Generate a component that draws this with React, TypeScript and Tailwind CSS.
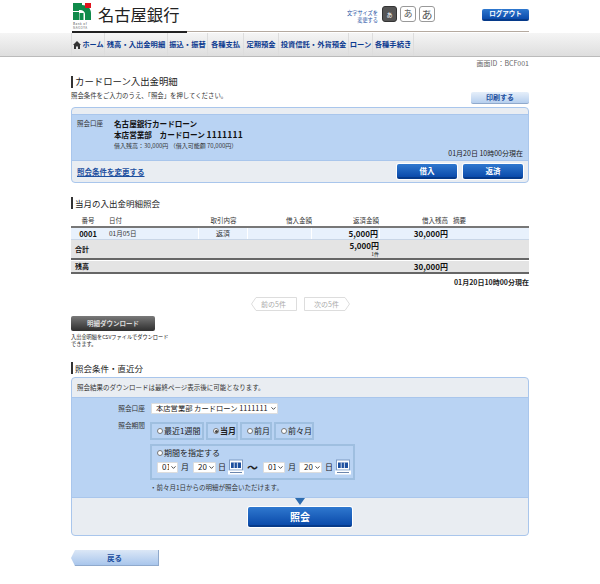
import React from "react";
import { ChevronDown } from "lucide-react";

const jp = "font-['Noto_Sans_CJK_JP','Liberation_Sans',sans-serif]";

const navItems = [
  { label: "残高・入出金明細", w: "w-[63px]" },
  { label: "振込・振替", w: "w-[40px]" },
  { label: "各種支払", w: "w-[36px]" },
  { label: "定期預金", w: "w-[35px]" },
  { label: "投資信託・外貨預金", w: "w-[70px]" },
  { label: "ローン", w: "w-[24px]" },
  { label: "各種手続き", w: "w-[41px]" },
];

const cols = "grid grid-cols-[34px_94px_49px_64px_68px_70px_79px]";

const Logo = () => (
  <svg width="20" height="27" viewBox="0 0 20 27">
    <path d="M1 1h9v2c5 0 9 3 9 8v7h-6v-6c0-2-2-4-5-4H7v1H1z" fill="#0f8a4a" />
    <path d="M1 10h6v8H1z" fill="#0f8a4a" />
    <path d="M7.5 11h4v7h-4z" fill="#0f8a4a" />
    <rect x="13" y="1" width="6" height="5" fill="#e0141e" />
    <text x="1" y="22.5" fontSize="3" letterSpacing="0.5" fill="#555">Bank of</text>
    <text x="1" y="26.5" fontSize="3" letterSpacing="0.5" fill="#555">NAGOYA</text>
  </svg>
);

const HomeIcon = () => (
  <svg width="8" height="8" viewBox="0 0 8 8" className="mr-[2px]">
    <path d="M4 0L8 4H7V8H5V5.5H3V8H1V4H0z" fill="#333" />
  </svg>
);

const Calendar = () => (
  <svg width="16" height="16" viewBox="0 0 16 16">
    <rect x="1.5" y="1" width="13" height="10" fill="#fff" stroke="#7f9cc4" />
    <rect x="3" y="3.5" width="10" height="5.5" fill="#1d4f9e" />
    <path d="M6.2 3.5v5.5M9.4 3.5v5.5" stroke="#fff" strokeWidth="0.8" />
    <rect x="0" y="11.5" width="16" height="4" fill="#fff" />
    <rect x="2" y="13" width="12" height="1" fill="#6b86ad" />
  </svg>
);

const SectionTitle = ({ children, size }: { children: React.ReactNode; size: string }) => (
  <div className="flex items-center h-[12px]">
    <div className="w-[2px] h-[12px] bg-[#333] mr-[2px]" />
    <span className={`${size} text-[#222] leading-none`}>{children}</span>
  </div>
);

const BlueButton = ({ label, w, h, size }: { label: string; w: string; h: string; size: string }) => (
  <div className={`${w} ${h} ${size} rounded-[2px] flex items-center justify-center text-white font-bold border-b-2 border-[#063a8a] bg-gradient-to-b from-[#2f78cf] to-[#0b4bab] shadow-[0_0_0_1px_#fff]`}>
    {label}
  </div>
);

const Choice = ({ label, w, checked }: { label: string; w: string; checked?: boolean }) => (
  <label className={`${w} h-[18px] border-2 border-[#9fbfe0] bg-[#b9d3f3] flex items-center pl-[5px] gap-[1px] text-[8px] text-[#222] ${checked ? "font-bold" : ""}`}>
    <span className="w-[6px] h-[6px] rounded-full border border-[#777] bg-white flex items-center justify-center">
      {checked && <span className="w-[3px] h-[3px] rounded-full bg-[#444]" />}
    </span>
    {label}
  </label>
);

const Dropdown = ({ value, w, size = "text-[8px]" }: { value: string; w: string; size?: string }) => (
  <div className={`${w} h-[11px] relative`}>
    <select
      defaultValue={value}
      className={`appearance-none w-full h-full bg-white ${size} leading-none rounded-[1px] border border-[#ddd] text-[#222] pl-[4px] pr-[8px] block`}
    >
      <option>{value}</option>
    </select>
    <ChevronDown size={7} strokeWidth={3} className="absolute right-[1px] top-[2px] text-[#333] pointer-events-none" />
  </div>
);

const PagerButton = ({ label, flip }: { label: string; flip?: boolean }) => (
  <div className="relative w-[46px] h-[14px] flex items-center justify-center text-[7px] text-[#aaa]">
    <svg width="46" height="14" viewBox="0 0 46 14" className={`absolute inset-0 ${flip ? "-scale-x-100" : ""}`}>
      <path d="M0.5 0.5H41L45.5 7L41 13.5H0.5z" fill="#fff" stroke="#ddd" />
    </svg>
    <span className="relative">{label}</span>
  </div>
);

export default function App() {
  return (
    <div className={`w-[600px] h-[584px] overflow-hidden bg-white ${jp}`}>
      {/* header */}
      <div className="w-[458px] ml-[71px] h-[33px]">
        <div className="flex items-start pt-[2px] h-[31px]">
          <div className="ml-[1px]"><Logo /></div>
          <span className="ml-[6px] mt-[2px] text-[16.3px] leading-[20px] text-[#222]">名古屋銀行</span>
          <div className="ml-auto flex items-start">
            <div className="mt-[7px] text-[5.2px] leading-[7px] text-right text-[#1c4f9f]">
              文字サイズを<br />変更する
            </div>
            <div className="ml-[4px] mt-[4px] flex gap-[3px]">
              <div className="w-[15px] h-[16px] rounded-[3px] bg-[#555] border border-[#333] text-white text-[6px] flex items-center justify-center">あ</div>
              <div className="w-[16px] h-[16px] rounded-[3px] bg-white border border-[#999] text-[#555] text-[9px] flex items-center justify-center">あ</div>
              <div className="w-[16px] h-[16px] rounded-[3px] bg-white border border-[#999] text-[#555] text-[11px] flex items-center justify-center">あ</div>
            </div>
            <div className="ml-[47px] mt-[7px]">
              <BlueButton label="ログアウト" w="w-[47px]" h="h-[12px]" size="text-[6.5px]" />
            </div>
          </div>
        </div>
        <div className="flex h-[2px] w-[457px] ml-[1px]">
          <div className="w-[115px] bg-[#222]" />
          <div className="flex-1 bg-[#b5aaa0] h-[1px]" />
        </div>
      </div>

      {/* nav */}
      <div className="h-[24px] border-b border-[#bbb] bg-gradient-to-b from-[#f5f5f5] to-[#dedede] pl-[71px] flex">
        <div className="w-[34px] border-x border-[#ddd] flex items-center justify-center text-[7px] font-bold text-[#0b3a90]">
          <HomeIcon />ホーム
        </div>
        {navItems.map((n) => (
          <div key={n.label} className={`${n.w} border-r border-[#ddd] flex items-center justify-center text-[7.3px] font-bold text-[#0b3a90] whitespace-nowrap`}>
            {n.label}
          </div>
        ))}
      </div>

      <div className="w-[458px] ml-[71px]">
        <div className="h-[13px] pt-[2px] text-right text-[7px] leading-[9px] text-[#666]">画面ID：BCF001</div>

        <div className="mt-[6px]"><SectionTitle size="text-[9.4px]">カードローン入出金明細</SectionTitle></div>

        <div className="mt-[1px] flex items-start justify-between h-[16px]">
          <span className="mt-[2px] text-[6.4px] leading-[9px] text-[#333]">照会条件をご入力のうえ、「照会」を押してください。</span>
          <div className="mt-[3px] w-[58px] h-[12px] rounded-[2px] border-b border-[#8fa9cc] bg-gradient-to-b from-[#e6effa] to-[#b6cfee] flex items-center justify-center text-[7px] text-[#1c4f9f] font-bold">印刷する</div>
        </div>

        {/* account card */}
        <div className="mt-[2px] h-[76px] rounded-[4px] border border-[#a9c6ec] bg-[#e9edf2] pt-[6px] overflow-hidden">
          <div className="h-[47px] bg-[#b9d3f3] border-y border-[#a9c6ec] flex relative">
            <div className="ml-[5px] mt-[4px] w-[37px] text-[6.5px] leading-[9px] text-[#333]">照会口座</div>
            <div className="mt-[3px]">
              <div className="text-[7.6px] leading-[11px] font-bold text-[#111]">名古屋銀行カードローン</div>
              <div className="text-[7.6px] leading-[11px] font-bold text-[#111]">
                本店営業部　カードローン <span className="text-[8.5px] tracking-[0.2px]">1111111</span>
              </div>
              <div className="mt-[1px] text-[6px] leading-[9px] text-[#333]">借入残高：30,000円 （借入可能額 70,000円）</div>
            </div>
            <div className="absolute right-[5px] bottom-[2px] text-[7px] leading-[9px] text-[#222]">01月20日 10時00分現在</div>
          </div>
          <div className="flex items-center h-[21px] pl-[5px] pr-[5px]">
            <span className="text-[7.5px] font-bold text-[#1c4f9f] underline">照会条件を変更する</span>
            <div className="ml-auto flex gap-[6px]">
              <BlueButton label="借入" w="w-[60px]" h="h-[15px]" size="text-[7.5px]" />
              <BlueButton label="返済" w="w-[60px]" h="h-[15px]" size="text-[7.5px]" />
            </div>
          </div>
        </div>

        <div className="mt-[14px]"><SectionTitle size="text-[8.5px]">当月の入出金明細照会</SectionTitle></div>

        {/* table */}
        <div className="mt-[5px] text-[6.5px] text-[#333]">
          <div className={`${cols} h-[12px] leading-[12px]`}>
            <div className="text-center">番号</div>
            <div className="pl-[4px]">日付</div>
            <div className="text-center">取引内容</div>
            <div className="text-right">借入金額</div>
            <div className="text-right pr-[1px]">返済金額</div>
            <div className="text-right pr-[2px]">借入残高</div>
            <div className="pl-[3px]">摘要</div>
          </div>
          <div className={`${cols} h-[14px] border-t-2 border-[#777] bg-[#e8f1fc] leading-[11px] border-b border-b-[#c9d6e6]`}>
            <div className="text-center font-bold text-[7.5px] text-[#111]">0001</div>
            <div className="pl-[4px] border-r border-white">01月05日</div>
            <div className="text-center border-r border-white text-[7px]">返済</div>
            <div className="border-r border-white" />
            <div className="text-right pr-[1px] font-bold text-[8px] text-[#111] border-r border-white">5,000円</div>
            <div className="text-right pr-[2px] font-bold text-[8px] text-[#111]">30,000円</div>
            <div />
          </div>
          <div className={`${cols} h-[20px] bg-[#e4e4e4] border-b-2 border-[#666]`}>
            <div className="pl-[4px] font-bold text-[7px] leading-[18px] text-[#111]">合計</div>
            <div /><div /><div />
            <div className="text-right pr-[1px] font-bold text-[8px] leading-[10px] text-[#111] pt-[1px]">
              5,000円
              <div className="text-[5px] leading-[6px] font-normal">1件</div>
            </div>
            <div /><div />
          </div>
          <div className={`${cols} mt-[1px] h-[13px] bg-[#e4e4e4] border-b-2 border-[#666]`}>
            <div className="pl-[4px] font-bold text-[7px] leading-[11px] text-[#111]">残高</div>
            <div /><div /><div /><div />
            <div className="text-right pr-[2px] font-bold text-[8px] leading-[11px] text-[#111]">30,000円</div>
            <div />
          </div>
          <div className="mt-[4px] text-right text-[7px] leading-[9px] font-bold text-[#222]">01月20日10時00分現在</div>
        </div>

        {/* pager */}
        <div className="mt-[10px] flex justify-center gap-[7px]">
          <PagerButton label="前の5件" flip />
          <PagerButton label="次の5件" />
        </div>

        <div className="mt-[5px] w-[84px] h-[15px] rounded-[2px] bg-gradient-to-b from-[#7a7a7a] to-[#2f2f2f] flex items-center justify-center text-[6.5px] text-[#ddd] font-bold">明細ダウンロード</div>
        <div className="mt-[2px] text-[5.2px] leading-[7px] text-[#222] whitespace-nowrap">
          入出金明細をCSVファイルでダウンロード<br />できます。
        </div>

        <div className="mt-[15px]"><SectionTitle size="text-[8.5px]">照会条件・直近分</SectionTitle></div>

        {/* search form */}
        <div className="mt-[3px] h-[159px] rounded-[4px] border border-[#a9c6ec] bg-[#e9edf2] overflow-hidden">
          <div className="h-[19px] pl-[5px] text-[6.5px] leading-[18px] text-[#333]">照会結果のダウンロードは最終ページ表示後に可能となります。</div>
          <div className="h-[101px] bg-[#b9d3f3] border-y border-[#a9c6ec] overflow-hidden">
            <div className="flex items-center mt-[5px] h-[11px]">
              <div className="w-[73px] text-right text-[6.7px] text-[#333]">照会口座</div>
              <div className="ml-[6px]">
                <Dropdown value="本店営業部 カードローン 1111111" w="w-[127px]" size="text-[7.3px]" />
              </div>
            </div>
            <div className="flex mt-[7px]">
              <div className="w-[73px] text-right text-[6.7px] leading-[8px] text-[#333]">照会期間</div>
              <div className="ml-[5px]">
                <div className="mt-[1px] flex gap-[2px]">
                  <Choice label="最近1週間" w="w-[54px]" />
                  <Choice label="当月" w="w-[32px]" checked />
                  <Choice label="前月" w="w-[32px]" />
                  <Choice label="前々月" w="w-[40px]" />
                </div>
                <div className="mt-[4px] w-[205px] h-[36px] border-2 border-[#9fbfe0] pl-[5px] pt-[1px] text-[8px] text-[#222]">
                  <div className="flex items-center gap-[1px] h-[11px] leading-none">
                    <span className="w-[6px] h-[6px] rounded-full border border-[#777] bg-white" />期間を指定する
                  </div>
                  <div className="flex items-center h-[18px]">
                    <Dropdown value="01" w="w-[21px]" />
                    <span className="ml-[3px] w-[12px]">月</span>
                    <Dropdown value="20" w="w-[23px]" />
                    <span className="ml-[2px] w-[10px]">日</span>
                    <Calendar />
                    <span className="ml-[3px] w-[16px] text-[11px] font-bold leading-none">～</span>
                    <Dropdown value="01" w="w-[22px]" />
                    <span className="ml-[3px] w-[11px]">月</span>
                    <Dropdown value="20" w="w-[23px]" />
                    <span className="ml-[3px] w-[10px]">日</span>
                    <Calendar />
                  </div>
                </div>
                <div className="mt-[3px] text-[6.5px] leading-[9px] text-[#333]">・前々月1日からの明細が照会いただけます。</div>
              </div>
            </div>
          </div>
          <div className="flex flex-col items-center">
            <div className="w-0 h-0 border-x-[5px] border-x-transparent border-t-[7px] border-t-[#2d6cb0]" />
            <div className="mt-[2px]">
              <BlueButton label="照会" w="w-[104px]" h="h-[20px]" size="text-[10px]" />
            </div>
          </div>
        </div>

        <div className="mt-[14px] w-[88px] h-[16px] border-b border-r border-[#8fa9cc] bg-gradient-to-b from-[#dbe7f6] to-[#a9c6ec] flex items-center justify-center text-[7.5px] font-bold text-[#1c4f9f] [clip-path:polygon(4px_0,100%_0,100%_100%,4px_100%,0_50%)]">戻る</div>
      </div>
    </div>
  );
}
